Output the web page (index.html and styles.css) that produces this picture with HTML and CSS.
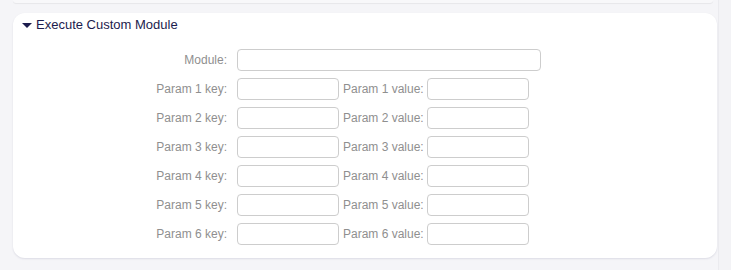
FILE: index.html
```html
<!DOCTYPE html>
<html>
<head>
<meta charset="utf-8">
<link rel="stylesheet" href="styles.css">
</head>
<body>
<div class="page">
  <div class="main">
    <div class="prev-card"></div>
    <section class="card">
      <h2 class="card-title"><span class="caret"></span>Execute Custom Module</h2>
      <div class="form">
        <div class="row">
          <label class="lbl">Module:</label>
          <input class="inp inp-module" type="text">
        </div>
        <div class="row">
          <label class="lbl">Param 1 key:</label>
          <input class="inp inp-key" type="text">
          <label class="lbl-val">Param 1 value:</label>
          <input class="inp inp-val" type="text">
        </div>
        <div class="row">
          <label class="lbl">Param 2 key:</label>
          <input class="inp inp-key" type="text">
          <label class="lbl-val">Param 2 value:</label>
          <input class="inp inp-val" type="text">
        </div>
        <div class="row">
          <label class="lbl">Param 3 key:</label>
          <input class="inp inp-key" type="text">
          <label class="lbl-val">Param 3 value:</label>
          <input class="inp inp-val" type="text">
        </div>
        <div class="row">
          <label class="lbl">Param 4 key:</label>
          <input class="inp inp-key" type="text">
          <label class="lbl-val">Param 4 value:</label>
          <input class="inp inp-val" type="text">
        </div>
        <div class="row">
          <label class="lbl">Param 5 key:</label>
          <input class="inp inp-key" type="text">
          <label class="lbl-val">Param 5 value:</label>
          <input class="inp inp-val" type="text">
        </div>
        <div class="row">
          <label class="lbl">Param 6 key:</label>
          <input class="inp inp-key" type="text">
          <label class="lbl-val">Param 6 value:</label>
          <input class="inp inp-val" type="text">
        </div>
      </div>
    </section>
  </div>
  <div class="side"></div>
</div>
</body>
</html>
```
FILE: styles.css
```css
html, body {
  margin: 0;
  padding: 0;
  background: #f5f5f8;
  font-family: "Liberation Sans", Arial, sans-serif;
}
.page {
  display: flex;
  height: 270px;
  overflow: hidden;
}
.main {
  width: 718px;
  flex: none;
}
.side {
  flex: 1;
  border-left: 1px solid #ebebef;
  background: #f3f3f6;
}
.prev-card {
  height: 3px;
  margin: 0 5px 0 13px;
  background: #f8f8fa;
  border-radius: 0 0 10px 10px;
  box-shadow: 0 1px 1px rgba(0,0,0,0.06);
}
.card {
  margin: 10px 1px 0 13px;
  background: #fff;
  border-radius: 12px;
  box-shadow: 0 1px 2px rgba(40,40,90,0.12);
  height: 245px;
  box-sizing: border-box;
}
.card-title {
  margin: 0;
  padding: 0 0 0 9px;
  height: 24px;
  box-sizing: border-box;
  font-size: 13px;
  font-weight: normal;
  color: #1c1c4e;
  display: flex;
  align-items: center;
  line-height: 16px;
}
.caret {
  width: 0;
  height: 0;
  border-left: 5px solid transparent;
  border-right: 5px solid transparent;
  border-top: 5px solid #1c1c4e;
  margin-right: 4px;
  margin-top: 1px;
}
.form {
  display: flex;
  flex-direction: column;
  gap: 7px;
  padding-top: 12px;
}
.row {
  display: flex;
  align-items: center;
  height: 22px;
}
.lbl {
  width: 224px;
  text-align: right;
  padding-right: 10px;
  box-sizing: border-box;
  font-size: 12px;
  color: #8f8f8f;
}
.lbl-val {
  font-size: 12px;
  color: #8f8f8f;
  margin: 0 3px 0 4px;
}
.inp {
  height: 22px;
  box-sizing: border-box;
  border: 1px solid #cdcdcd;
  border-radius: 4px;
  background: #fff;
  padding: 0 4px;
  margin: 0;
  font-family: inherit;
  font-size: 12px;
}
.inp-module { width: 304px; }
.inp-key { width: 102px; }
.inp-val { width: 102px; }
```
